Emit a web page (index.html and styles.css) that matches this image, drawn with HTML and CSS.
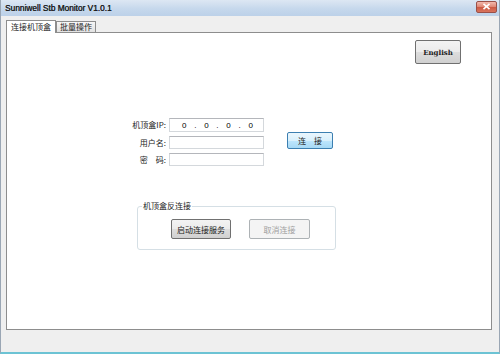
FILE: index.html
```html
<!DOCTYPE html>
<html>
<head>
<meta charset="utf-8">
<link rel="stylesheet" href="styles.css">
</head>
<body>
<div class="window">
  <div class="titlebar">
    <span class="title">Sunniwell Stb Monitor V1.0.1</span>
    <span class="close"><svg width="9" height="7" viewBox="0 0 9 7"><path d="M1.5 0.8 L7.5 6.2 M7.5 0.8 L1.5 6.2" stroke="#fff" stroke-width="1.6"/></svg></span>
  </div>
  <div class="client">
    <div class="tabs">
      <div class="tab active">连接机顶盒</div>
      <div class="tab">批量操作</div>
    </div>
    <div class="panel">
      <div class="toprow"><button class="btn english">English</button></div>
      <div class="form">
        <label class="lbl">机顶盒IP:</label>
        <div class="input ip"><span>0</span><span>.</span><span>0</span><span>.</span><span>0</span><span>.</span><span>0</span></div>
        <button class="btn connect">连　接</button>
        <label class="lbl">用户名:</label>
        <div class="input"></div>
        <label class="lbl">密　码:</label>
        <div class="input"></div>
      </div>
      <div class="group">
        <span class="legend">机顶盒反连接</span>
        <button class="btn start">启动连接服务</button>
        <button class="btn cancel" disabled>取消连接</button>
      </div>
    </div>
  </div>
</div>
</body>
</html>
```
FILE: styles.css
```css
html, body {
  margin: 0;
  padding: 0;
  width: 500px;
  height: 354px;
  overflow: hidden;
  font-family: "Noto Sans CJK SC", "Liberation Sans", sans-serif;
}
.window {
  width: 500px;
  height: 354px;
  box-sizing: border-box;
  background: #efefef;
  border-left: 1px solid #9aa6b4;
  border-right: 1px solid #9aa6b4;
  border-bottom: 2px solid #6cc3d4;
  display: flex;
  flex-direction: column;
}
.titlebar {
  height: 16px;
  flex: none;
  background: linear-gradient(#dde7f3, #c6d8ec 55%, #bcd1e9);
  display: flex;
  align-items: center;
  justify-content: space-between;
  padding: 0 2px 0 4px;
}
.title {
  font-family: "Liberation Sans", sans-serif;
  font-size: 8.3px;
  color: #1c1c1c;
  text-shadow: 0.3px 0 0 #1c1c1c;
}
.close {
  width: 19px;
  height: 10px;
  margin-top: -3px;
  border: 1px solid #9a5048;
  border-radius: 2px;
  background: linear-gradient(#f2b8ac, #e08a78 45%, #cc5a44 55%, #d9745e);
  display: flex;
  align-items: center;
  justify-content: center;
}
.client {
  flex: 1;
  padding: 4px 7px 0 5px;
  display: flex;
  flex-direction: column;
}
.tabs {
  display: flex;
  align-items: flex-end;
  height: 12px;
  position: relative;
  z-index: 1;
}
.tab {
  font-size: 8px;
  line-height: 10px;
  height: 10px;
  padding: 0 3px;
  border: 1px solid #8d8d8d;
  border-bottom: none;
  background: linear-gradient(#f6f6f6, #e2e2e2);
  color: #222;
}
.tab.active {
  height: 12px;
  line-height: 12px;
  background: #fff;
  padding: 0 4px;
  margin-bottom: -1px;
}
.panel {
  height: 298px;
  box-sizing: border-box;
  background: #fff;
  border: 1px solid #8d8d8d;
  display: flex;
  flex-direction: column;
}
.toprow {
  display: flex;
  justify-content: flex-end;
  padding: 7px 30px 0 0;
}
.btn {
  font-family: "Noto Sans CJK SC", "Liberation Sans", sans-serif;
  font-size: 8px;
  color: #222;
  border: 1px solid #707070;
  border-radius: 2px;
  background: linear-gradient(#f3f3f3, #ebebeb 50%, #dddddd 51%, #d0d0d0);
  padding: 0;
  box-sizing: border-box;
}
.english {
  width: 46px;
  height: 24px;
  font-family: "DejaVu Serif", serif;
  font-size: 7px;
  font-weight: bold;
}
.form {
  margin: 54px 0 0 113px;
  display: grid;
  grid-template-columns: 46px 95px 46px;
  grid-template-rows: 14px 13px 13px;
  column-gap: 3px;
  row-gap: 4px;
}
.form .connect {
  grid-column: 3;
  grid-row: 1 / 4;
  align-self: start;
  margin: 14px 0 0 20px;
  width: 46px;
  height: 17px;
  border-color: #3c7fb1;
  background: linear-gradient(#eaf6fd, #d9f0fc 50%, #bee6fd 51%, #a7d9f5);
}
.lbl {
  font-size: 8px;
  text-align: right;
  align-self: center;
  color: #222;
  line-height: 10px;
}
.input {
  grid-column: 2;
  box-sizing: border-box;
  border: 1px solid #d4d8dc;
  border-top-color: #b4b6bb;
  background: #fff;
}
.input.ip {
  display: flex;
  justify-content: space-between;
  align-items: center;
  padding: 0 10px 0 12px;
  font-family: "Liberation Sans", sans-serif;
  font-size: 8px;
  color: #000;
}
.group {
  position: relative;
  margin: 40px 0 0 130px;
  width: 199px;
  height: 44px;
  box-sizing: border-box;
  border: 1px solid #d5dfe5;
  border-radius: 3px;
  display: flex;
  align-items: flex-start;
  padding: 12px 0 0 33px;
  gap: 18px;
}
.legend {
  position: absolute;
  left: 4px;
  top: -6px;
  background: #fff;
  padding: 0 1px;
  font-size: 8px;
  line-height: 10px;
  color: #222;
}
.start {
  width: 60px;
  height: 20px;
}
.cancel {
  width: 61px;
  height: 20px;
  color: #a0a0a0;
  border-color: #adb2b5;
  background: #f4f4f4;
}
```
